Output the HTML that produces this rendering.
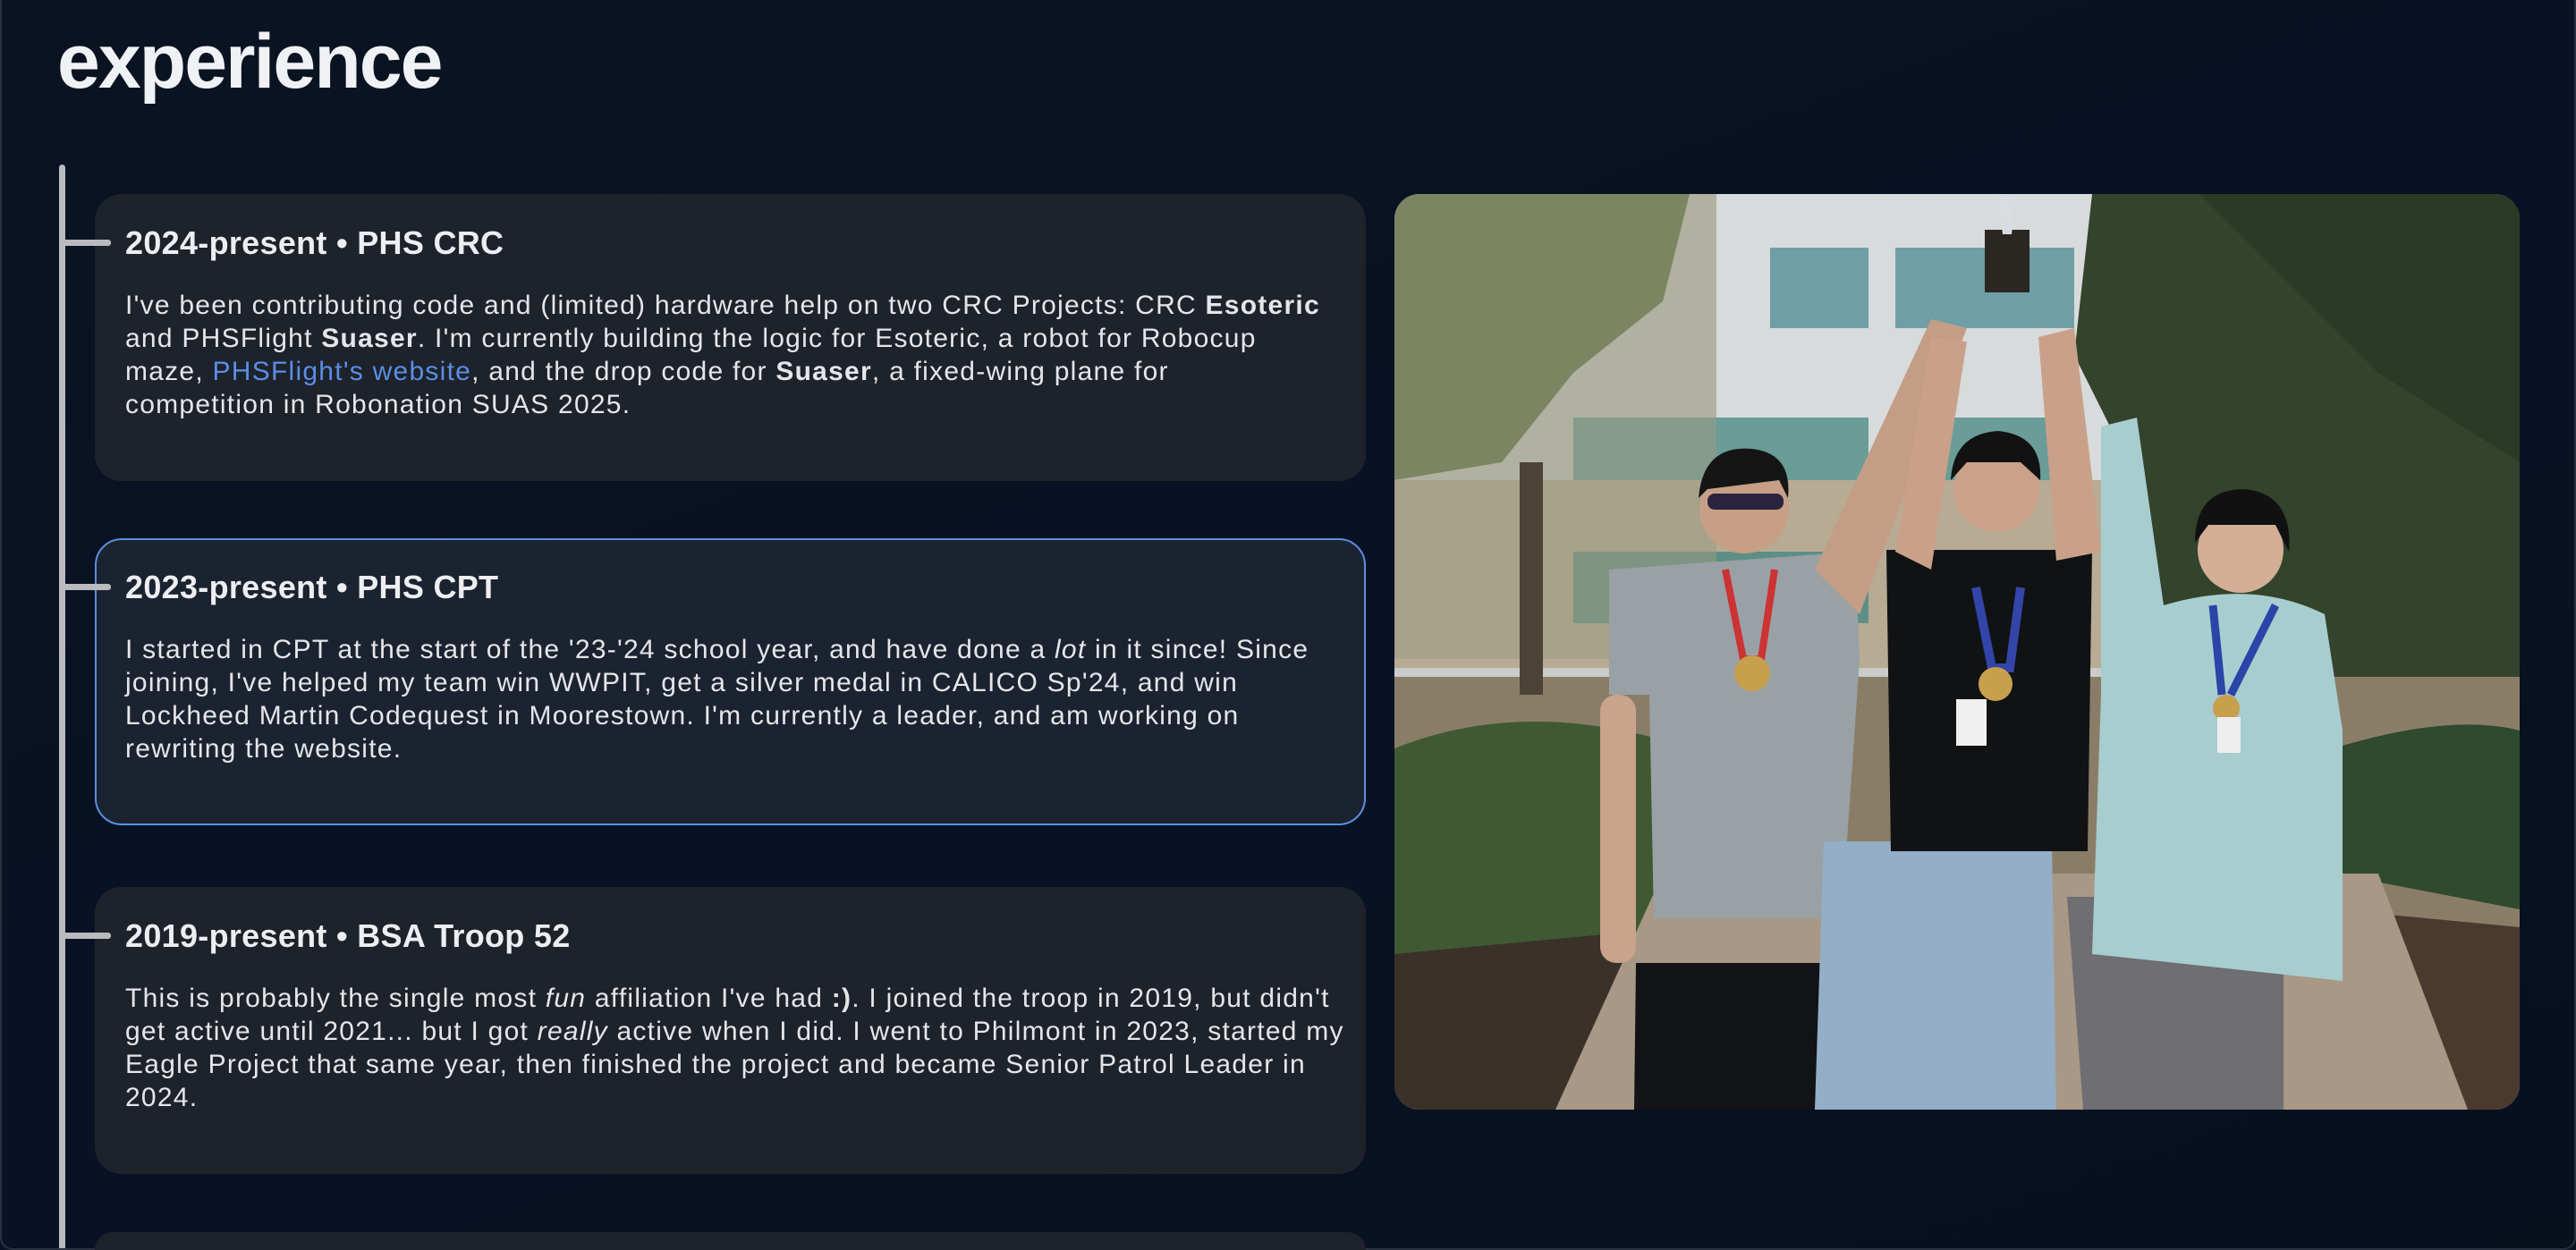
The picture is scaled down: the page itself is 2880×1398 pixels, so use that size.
<!DOCTYPE html>
<html><head><meta charset="utf-8"><style>
*{margin:0;padding:0;box-sizing:border-box}
html,body{width:2880px;height:1398px;overflow:hidden}
body{background:linear-gradient(160deg,#0b1322 0%,#081224 60%,#07101d 100%);font-family:"Liberation Sans",sans-serif;color:#eceef2;position:relative;border:2px solid #2a3140;border-top:none;border-radius:0 0 14px 14px}
h1{position:absolute;left:62px;top:20px;font-size:86px;font-weight:700;letter-spacing:-2px;color:#f0f1f4}
.line{position:absolute;left:64px;top:184px;width:7px;height:1212px;background:#b9bbbf;border-radius:4px 4px 0 0}
.card{position:absolute;left:104px;width:1421px;height:321px;background:#1d222b;border-radius:30px;padding:0 34px}
.card.sel{border:2px solid #5b8fdd;background:#1c2330}
.conn{position:absolute;left:-38px;top:51px;width:56px;height:7px;background:#b9bbbf;border-radius:3px}
.card h2{position:absolute;left:34px;top:34px;font-size:36px;font-weight:700;white-space:nowrap;letter-spacing:.3px}
.card p{position:absolute;left:34px;top:106px;font-size:30px;line-height:37px;white-space:nowrap;color:#e4e6ea;letter-spacing:1.25px}
.card.sel h2,.card.sel p,.card.sel .conn{margin-left:-2px}
.card.sel h2{top:32px}.card.sel p{top:104px}.card.sel .conn{top:49px}
a{color:#5b8ee6;text-decoration:none}
.photo{position:absolute;left:1557px;top:217px;width:1258px;height:1024px;border-radius:28px;overflow:hidden}
</style></head><body>
<h1>experience</h1>
<div class="line"></div>

<div class="card" style="top:217px"><div class="conn"></div><h2>2024-present • PHS CRC</h2>
<p>I've been contributing code and (limited) hardware help on two CRC Projects: CRC <b>Esoteric</b><br>and PHSFlight <b>Suaser</b>. I'm currently building the logic for Esoteric, a robot for Robocup<br>maze, <a>PHSFlight's website</a>, and the drop code for <b>Suaser</b>, a fixed-wing plane for<br>competition in Robonation SUAS 2025.</p></div>

<div class="card sel" style="top:602px"><div class="conn"></div><h2>2023-present • PHS CPT</h2>
<p>I started in CPT at the start of the '23-'24 school year, and have done a <i>lot</i> in it since! Since<br>joining, I've helped my team win WWPIT, get a silver medal in CALICO Sp'24, and win<br>Lockheed Martin Codequest in Moorestown. I'm currently a leader, and am working on<br>rewriting the website.</p></div>

<div class="card" style="top:992px"><div class="conn"></div><h2>2019-present • BSA Troop 52</h2>
<p>This is probably the single most <i>fun</i> affiliation I've had <b>:)</b>. I joined the troop in 2019, but didn't<br>get active until 2021... but I got <i>really</i> active when I did. I went to Philmont in 2023, started my<br>Eagle Project that same year, then finished the project and became Senior Patrol Leader in<br>2024.</p></div>

<div class="card" style="top:1378px;height:20px;border-radius:30px 30px 0 0"></div>

<div class="photo"><svg width="1258" height="1024" viewBox="0 0 1258 1024">
<rect width="1258" height="1024" fill="#c9ccc8"/>
<rect x="360" y="0" width="470" height="330" fill="#d8dbdb"/>
<rect x="420" y="60" width="110" height="90" fill="#6f9ea6"/>
<rect x="560" y="60" width="200" height="90" fill="#6f9ea6"/>
<rect x="200" y="250" width="330" height="70" fill="#6a9c98"/>
<rect x="560" y="250" width="200" height="70" fill="#6a9c98"/>
<rect x="0" y="320" width="830" height="210" fill="#b7ab94"/>
<rect x="200" y="400" width="330" height="80" fill="#5d8f86"/>
<rect x="0" y="0" width="360" height="520" fill="#9a9a82" opacity=".55"/>
<path d="M0 0 H330 L300 120 L200 200 L120 300 L0 320Z" fill="#6f7a52" opacity=".8"/>
<path d="M780 0 H1258 V760 L1150 700 L1000 600 L860 520 L820 300 L760 180Z" fill="#34432c"/>
<path d="M900 0 H1258 V300 L1100 200Z" fill="#2b3a25"/>
<rect x="0" y="540" width="1258" height="484" fill="#8a7d68"/>
<path d="M0 620 Q150 560 330 620 L330 880 L0 900Z" fill="#3f5a32"/>
<path d="M1050 620 Q1180 580 1258 600 V800 L1050 760Z" fill="#2f4a2c"/>
<path d="M0 850 L320 820 L300 1024 H0Z" fill="#3a3129"/>
<path d="M1050 800 L1258 820 V1024 H1130Z" fill="#4a3a2e"/>
<path d="M300 760 L1100 760 L1200 1024 L180 1024Z" fill="#a99886"/>
<rect x="140" y="300" width="26" height="260" fill="#4d4236"/>
<path d="M270 860 L480 860 L470 1024 L268 1024Z" fill="#121316"/>
<path d="M240 420 L515 400 L520 520 L500 810 L290 810 L285 560 L240 560Z" fill="#9aa1a6"/>
<rect x="230" y="560" width="40" height="300" rx="18" fill="#c9a38c"/>
<path d="M470 420 L600 140 L640 150 L520 470Z" fill="#c49d86"/>
<circle cx="391" cy="352" r="50" fill="#c79e86"/>
<path d="M340 340 Q345 280 400 285 Q445 290 440 340 L430 320 L350 330Z" fill="#151515"/>
<rect x="350" y="335" width="85" height="18" rx="8" fill="#2a2340"/>
<path d="M370 420 L390 520 L410 520 L425 420" stroke="#c33" stroke-width="8" fill="none"/>
<circle cx="400" cy="536" r="20" fill="#c7a04e"/>
<path d="M480 724 L735 724 L740 1024 L470 1024Z" fill="#93aec6"/>
<path d="M550 398 L780 398 L775 735 L555 735Z" fill="#111214"/>
<path d="M560 400 L600 160 L640 165 L600 420Z" fill="#c9a18a"/>
<path d="M740 410 L720 160 L760 150 L790 400Z" fill="#c9a18a"/>
<circle cx="673" cy="330" r="48" fill="#caa189"/>
<path d="M622 320 Q625 268 675 265 Q725 270 722 320 L700 300 L640 300Z" fill="#121212"/>
<path d="M650 440 L668 530 L688 530 L700 440" stroke="#3345a8" stroke-width="10" fill="none"/>
<circle cx="672" cy="548" r="19" fill="#c7a04e"/>
<rect x="628" y="565" width="34" height="52" fill="#f0f0f0"/>
<rect x="660" y="40" width="50" height="70" fill="#2a2622"/>
<path d="M675 0 L695 0 L690 45 L680 45Z" fill="#d9dce0"/>
<path d="M752 786 L994 786 L994 1024 L770 1024Z" fill="#6e6e73"/>
<path d="M790 260 L830 250 L860 460 Q960 430 1040 470 L1060 600 L1060 880 L780 850 L790 560Z" fill="#a7cdcf"/>
<circle cx="946" cy="398" r="48" fill="#d4ae95"/>
<path d="M895 390 Q895 330 950 330 Q1005 335 1000 400 L985 370 L910 370Z" fill="#111"/>
<path d="M915 460 L925 560 M985 460 L935 560" stroke="#2a44a8" stroke-width="9" fill="none"/>
<circle cx="930" cy="575" r="15" fill="#c7a04e"/>
<rect x="920" y="585" width="26" height="40" fill="#eee"/>
</svg></div>
</body></html>
